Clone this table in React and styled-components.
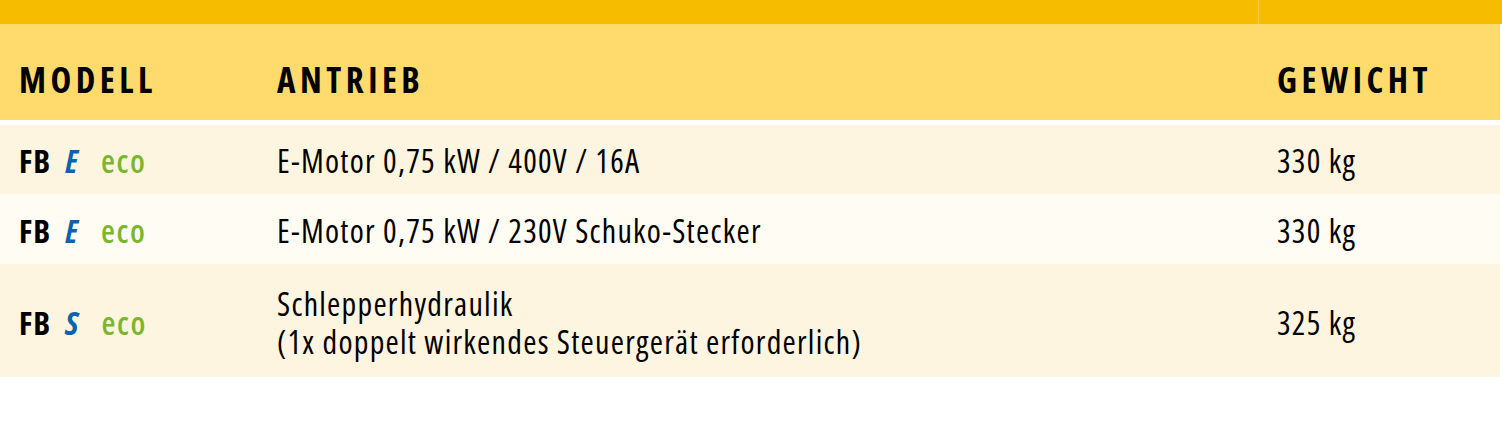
import React from "react";
import styled, { createGlobalStyle } from "styled-components";

const GlobalStyle = createGlobalStyle`
  html, body { margin: 0; padding: 0; background: #ffffff; }
  body {
    font-family: "Open Sans", "Noto Sans", sans-serif;
    color: #000;
  }
`;

const Table = styled.div`
  width: 1500px;
  display: flex;
  flex-direction: column;
`;

const TopBar = styled.div`
  height: 24px;
  display: grid;
  grid-template-columns: 1258px 1fr;
  width: 1502px;
`;

const TopCell = styled.div`
  background: #f6bc00;
  border-left: ${(p) => (p.$divider ? "1px solid #f9cd47" : "none")};
`;

const Grid = styled.div`
  display: grid;
  grid-template-columns: 277px 1000px 1fr;
  align-items: center;
  background: ${(p) => p.$bg};
  min-height: ${(p) => p.$h}px;
  margin-bottom: ${(p) => p.$gap || 0}px;
`;

const Cell = styled.div`
  padding-left: ${(p) => p.$pl || 0}px;
`;

const HeadText = styled.div`
  font-weight: 700;
  font-size: 35px;
  font-stretch: 87.5%;
  letter-spacing: 4.5px;
  line-height: 40px;
  padding-top: 16px;
`;

const BodyText = styled.div`
  font-size: 32px;
  font-stretch: 87.5%;
  letter-spacing: 1.25px;
  font-weight: 400;
  line-height: 38px;
  padding-top: ${(p) => p.$pt || 0}px;
  white-space: nowrap;
`;

const Model = styled.div`
  display: flex;
  align-items: baseline;
  font-size: 32px;
  font-stretch: 87.5%;
  letter-spacing: 1.1px;
  line-height: 38px;
  padding-top: ${(p) => p.$pt || 0}px;
`;

const Brand = styled.span`
  font-weight: 700;
  margin-right: 14px;
`;

const Variant = styled.span`
  font-weight: 700;
  font-style: italic;
  color: #0b63ad;
  margin-right: 22px;
`;

const Eco = styled.span`
  font-weight: 600;
  letter-spacing: 1.6px;
  color: #7bb62f;
`;

const rows = [
  { v: "E", drive: ["E-Motor 0,75 kW / 400V / 16A"], w: "330 kg", bg: "#fdf5df", h: 69, pt: 3 },
  { v: "E", drive: ["E-Motor 0,75 kW / 230V Schuko-Stecker"], w: "330 kg", bg: "#fffcf4", h: 70, pt: 3 },
  {
    v: "S",
    drive: ["Schlepperhydraulik", "(1x doppelt wirkendes Steuergerät erforderlich)"],
    w: "325 kg",
    bg: "#fdf5df",
    h: 113,
    pt: 5,
  },
];

export default function App() {
  return (
    <>
      <GlobalStyle />
      <Table>
        <TopBar>
          <TopCell />
          <TopCell $divider />
        </TopBar>
        <Grid $bg="#fedb6c" $h={96} $gap={5}>
          <Cell $pl={19}>
            <HeadText>MODELL</HeadText>
          </Cell>
          <Cell>
            <HeadText>ANTRIEB</HeadText>
          </Cell>
          <Cell>
            <HeadText>GEWICHT</HeadText>
          </Cell>
        </Grid>
        {rows.map((r, i) => (
          <Grid key={i} $bg={r.bg} $h={r.h}>
            <Cell $pl={19}>
              <Model $pt={r.pt}>
                <Brand>FB</Brand>
                <Variant>{r.v}</Variant>
                <Eco>eco</Eco>
              </Model>
            </Cell>
            <Cell>
              <BodyText $pt={r.pt}>
                {r.drive.map((d, j) => (
                  <div key={j}>{d}</div>
                ))}
              </BodyText>
            </Cell>
            <Cell>
              <BodyText $pt={r.pt}>{r.w}</BodyText>
            </Cell>
          </Grid>
        ))}
      </Table>
    </>
  );
}
